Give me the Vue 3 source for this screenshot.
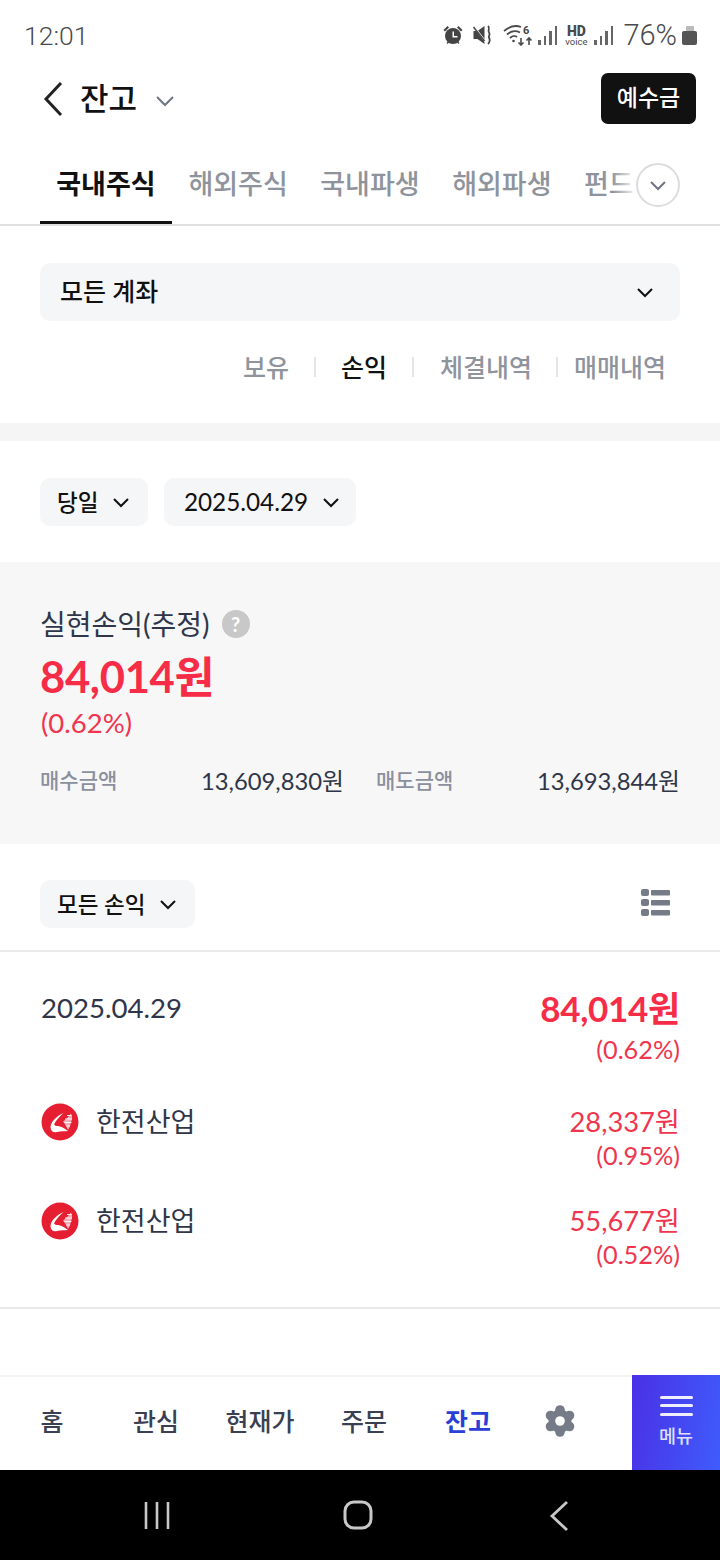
<script setup>
const tabs = ['국내주식', '해외주식', '국내파생', '해외파생', '펀드']
const subs = ['보유', '손익', '체결내역', '매매내역']
const stocks = [
  { name: '한전산업', amt: '28,337원', pct: '(0.95%)' },
  { name: '한전산업', amt: '55,677원', pct: '(0.52%)' }
]
const nav = ['홈', '관심', '현재가', '주문', '잔고']
const lobes = [[16, 5], [25.5, 10.5], [25.5, 21.5], [16, 27], [6.5, 21.5], [6.5, 10.5]]
</script>

<template>
  <div class="page">
    <div class="status">
      <span class="time">12:01</span>
      <div class="status-right">
        <svg width="22" height="22" viewBox="0 0 22 22" fill="#444"><circle cx="11" cy="12" r="8"/><path d="M1.500 6 5.500 2 7 3.500 3 7.500zM20.500 6 16.500 2 15 3.500l4 4zM4.500 19l2-2 1 1-2 2zM17.500 19l-2-2-1 1 2 2z"/><path d="M10.500 7.500h1.500V12h3.500v1.500h-5z" fill="#fff"/></svg>
        <svg class="ml-mute" width="22" height="22" viewBox="0 0 21 22" fill="#444"><path d="M1 7h4l7-5v18l-7-5H1z"/><path d="m1 2 13 17" stroke="#fff" stroke-width="2"/><path d="m1 3 11 14" stroke="#444" stroke-width="1.500"/><path d="M15.500 2c3 3-1 4 1 6.500s-1 3 0 5 1.500 4-1 6.500" fill="none" stroke="#444" stroke-width="1.800"/></svg>
        <svg class="ml-wifi" width="30" height="22" viewBox="0 0 30 22" fill="none" stroke="#4a4a4a" stroke-width="1.800"><path d="M1 7c6-5 12-6 17-4M4 10.500c4-3.500 9-4 13-2M7 14c2-2 5-2.500 7-1"/><circle cx="10.500" cy="17" r="1.300" fill="#4a4a4a" stroke="none"/><path d="M18 14v7m-2.500-2.500 2.500 2.500 2.500-2.500M26 21v-7m-2.500 2.500 2.500-2.500 2.500 2.500" stroke-width="1.600"/><text x="20" y="10" font-size="11" font-weight="700" font-family="Roboto" fill="#444" stroke="none">6</text></svg>
        <div class="bars b1"><i style="height:5px"></i><i style="height:9px"></i><i style="height:14px"></i><i style="height:19px"></i></div>
        <div class="hd"><b>HD</b><span>voice</span></div>
        <div class="bars b2"><i style="height:5px"></i><i style="height:9px"></i><i style="height:14px"></i><i style="height:19px"></i></div>
        <span class="pct">76%</span>
        <div class="batt"></div>
      </div>
    </div>

    <header class="head">
      <div class="head-left">
        <svg width="22" height="36" viewBox="0 0 22 36" fill="none" stroke="#222" stroke-width="3"><path d="M19 2 4 18l15 16"/></svg>
        <h1 class="title">잔고</h1>
        <svg class="title-caret" width="20" height="12" viewBox="0 0 20 12" fill="none" stroke="#6f7681" stroke-width="2"><path d="m2 2 8 8 8-8"/></svg>
      </div>
      <button class="deposit">예수금</button>
    </header>

    <div class="tabs">
      <div class="tab-row">
        <span v-for="(t, i) in tabs" :key="t" class="tab" :class="{ active: i === 0 }">{{ t }}</span>
      </div>
      <div class="fade"></div>
      <div class="more">
        <svg width="18" height="11" viewBox="0 0 18 11" fill="none" stroke="#6f7681" stroke-width="2"><path d="m2 2 7 7 7-7"/></svg>
      </div>
    </div>

    <div class="account">
      <span class="account-label">모든 계좌</span>
      <svg width="18" height="11" viewBox="0 0 18 11" fill="none" stroke="#111" stroke-width="2"><path d="m2 2 7 7 7-7"/></svg>
    </div>

    <div class="subs">
      <template v-for="(s, i) in subs" :key="s">
        <span v-if="i" class="sep" :class="{ wide: i === 2, tight: i === 3 }"></span>
        <span class="sub" :class="{ on: i === 1 }">{{ s }}</span>
      </template>
    </div>

    <div class="band"></div>

    <div class="filters">
      <div class="chip"><span>당일</span><svg width="18" height="11" viewBox="0 0 18 11" fill="none" stroke="#111" stroke-width="2"><path d="m2 2 7 7 7-7"/></svg></div>
      <div class="chip date"><span>2025.04.29</span><svg width="18" height="11" viewBox="0 0 18 11" fill="none" stroke="#111" stroke-width="2"><path d="m2 2 7 7 7-7"/></svg></div>
    </div>

    <section class="summary">
      <div class="sum-title">
        <span>실현손익(추정)</span>
        <span class="q">?</span>
      </div>
      <div class="sum-amt">84,014원</div>
      <div class="sum-pct">(0.62%)</div>
      <div class="sum-grid">
        <div class="sum-cell"><span class="lbl">매수금액</span><span class="val">13,609,830원</span></div>
        <div class="sum-cell"><span class="lbl">매도금액</span><span class="val">13,693,844원</span></div>
      </div>
    </section>

    <div class="list-bar">
      <div class="chip"><span>모든 손익</span><svg width="18" height="11" viewBox="0 0 18 11" fill="none" stroke="#111" stroke-width="2"><path d="m2 2 7 7 7-7"/></svg></div>
      <svg class="list-icon" width="30" height="28" viewBox="0 0 30 28" fill="#757b87"><rect x="1" y="1" width="8" height="7" rx="2"/><rect x="1" y="11" width="8" height="7" rx="2"/><rect x="1" y="21" width="8" height="7" rx="2"/><rect x="11" y="2" width="19" height="5.500" rx="1"/><rect x="11" y="12" width="19" height="5.500" rx="1"/><rect x="11" y="22" width="19" height="5.500" rx="1"/></svg>
    </div>

    <section class="result">
      <div class="res-head">
        <span class="res-date">2025.04.29</span>
        <div class="res-right">
          <div class="res-amt">84,014원</div>
          <div class="res-pct">(0.62%)</div>
        </div>
      </div>
      <div v-for="(s, i) in stocks" :key="i" class="stock">
        <div class="stock-left">
          <svg width="38" height="38" viewBox="0 0 38 38"><circle cx="19" cy="19" r="18.500" fill="#e61e32"/><path d="M22.500 10C16 13 10 18 9.500 24c0 4 2.500 6 6.500 5 4-1 8-.5 11-1-3-2-5-4-8-4.500-2-1-5 0-6-2 1.500-3.500 5-7.500 9.500-11.500z" fill="#fff"/><path d="M30 10.500c1.500 3 1.500 6 0 8.500-.5 3-1.500 6-3 8-1.500-3-3-6-5-8.500 3-2 5.500-5 8-8z" fill="#f8aab2"/><path d="M24 16h7M23.500 19.500h7M26 12.500h4.500M25.500 23h3.500" stroke="#fff" stroke-width=".9"/></svg>
          <span class="stock-name">{{ s.name }}</span>
        </div>
        <div class="stock-right">
          <div class="stock-amt">{{ s.amt }}</div>
          <div class="stock-pct">{{ s.pct }}</div>
        </div>
      </div>
    </section>

    <div class="spacer"></div>

    <nav class="nav">
      <div class="nav-items">
        <span v-for="n in nav" :key="n" class="nav-item" :class="{ on: n === '잔고' }">{{ n }}</span>
        <span class="nav-item gear">
          <svg width="32" height="32" viewBox="0 0 32 32">
            <g fill="#757b87">
              <circle cx="16" cy="16" r="11.500"/>
              <circle v-for="(p, i) in lobes" :key="i" :cx="p[0]" :cy="p[1]" r="4.800"/>
            </g>
            <circle cx="16" cy="16" r="4.800" fill="#fff"/>
          </svg>
        </span>
      </div>
      <div class="menu">
        <div class="burger"><i></i><i></i><i></i></div>
        <span>메뉴</span>
      </div>
    </nav>

    <div class="sysnav">
      <svg width="30" height="30" viewBox="0 0 30 30" stroke="#c8c8c8" stroke-width="2.600" fill="none"><path d="M4 2v27M15 2v27M26 2v27"/></svg>
      <svg width="30" height="30" viewBox="0 0 30 30" stroke="#c8c8c8" stroke-width="3" fill="none"><rect x="2" y="2" width="26" height="26" rx="9"/></svg>
      <svg width="30" height="32" viewBox="0 0 30 32" stroke="#c8c8c8" stroke-width="2.800" fill="none"><path d="M23 2 8 16l15 14"/></svg>
    </div>
  </div>
</template>

<style>
html, body { margin: 0; background: #fff; }
</style>

<style scoped>
.page {
  width: 720px;
  height: 1560px;
  display: flex;
  flex-direction: column;
  background: #fff;
  overflow: hidden;
  font-family: Lato, "Noto Sans CJK KR", sans-serif;
  color: #2f3649;
}
.status {
  height: 70px;
  flex: none;
  box-sizing: border-box;
  padding: 0 23px 0 24px;
  display: flex;
  align-items: center;
  justify-content: space-between;
  color: #555;
  font-family: Roboto, sans-serif;
}
.time { font-size: 26.500px; font-weight: 300; color: #4a4a4a; }
.status-right { display: flex; align-items: center; }
.ml-mute { margin-left: 8px; }
.ml-wifi { margin-left: 9px; }
.bars { display: flex; align-items: flex-end; justify-content: space-between; width: 19px; height: 19px; }
.bars i { width: 2.500px; background: #666; display: block; }
.b1 { margin-left: 5px; }
.b2 { margin-left: 7px; }
.hd { display: flex; flex-direction: column; align-items: center; margin-left: 8px; line-height: 1; color: #4a4a4a; width: 22px; }
.hd b { font-size: 14px; line-height: 12px; font-weight: 900; }
.hd span { font-size: 9.500px; line-height: 9px; }
.pct { font-size: 29px; font-weight: 300; margin-left: 10px; color: #4a4a4a; }
.batt {
  position: relative;
  width: 15px;
  height: 14px;
  margin-left: 5px;
  margin-top: 5px;
  background: #555;
  border-radius: 2px;
}
.batt::before {
  content: "";
  position: absolute;
  left: 3.500px;
  top: -5px;
  width: 8px;
  height: 5px;
  background: #bbb;
  border-radius: 1px 1px 0 0;
}
.head {
  height: 54px;
  flex: none;
  padding: 3px 24px 0 42px;
  box-sizing: border-box;
  display: flex;
  align-items: center;
  justify-content: space-between;
}
.head-left { display: flex; align-items: center; }
.title { margin: -2px 0 0 16px; font-size: 31px; line-height: 40px; font-weight: 500; color: #111; }
.title-caret { margin-left: 18px; margin-top: 4px; }
.deposit {
  width: 95px;
  height: 51px;
  border: 0;
  border-radius: 7px;
  background: #111;
  color: #fff;
  font: 500 23px "Noto Sans CJK KR", sans-serif;
  padding: 0 0 5px;
}
.tabs {
  position: relative;
  height: 102px;
  flex: none;
  box-sizing: border-box;
  border-bottom: 2px solid #dfdfdf;
  overflow: hidden;
}
.tab-row {
  height: 100px;
  display: flex;
  padding-left: 40px;
  box-sizing: border-box;
}
.tab {
  flex: none;
  box-sizing: border-box;
  padding: 38px 16.250px 0;
  font-size: 27px;
  line-height: 44px;
  font-weight: 500;
  color: #8e939c;
  white-space: nowrap;
}
.tab.active {
  color: #111;
  font-weight: 700;
  border-bottom: 3px solid #111;
  padding-right: 16.500px;
}
.fade {
  position: absolute;
  left: 612px;
  top: 30px;
  width: 108px;
  height: 60px;
  background: linear-gradient(90deg, rgba(255,255,255,0), #fff 24%);
}
.more {
  position: absolute;
  left: 636px;
  top: 39px;
  width: 44px;
  height: 44px;
  box-sizing: border-box;
  border: 2px solid #dcdcdc;
  border-radius: 50%;
  background: #fff;
  display: flex;
  align-items: center;
  justify-content: center;
}
.account {
  flex: none;
  margin: 37px 40px 0;
  height: 58px;
  box-sizing: border-box;
  padding: 0 26px 0 20px;
  border-radius: 10px;
  background: #f5f6f7;
  display: flex;
  align-items: center;
  justify-content: space-between;
  font-size: 25px;
  font-weight: 500;
  color: #111;
}
.account-label { margin-top: -4px; }
.subs {
  flex: none;
  height: 46px;
  margin-top: 23px;
  padding-right: 54px;
  display: flex;
  align-items: center;
  justify-content: flex-end;
  font-size: 25px;
  color: #8e939c;
  font-weight: 500;
}
.sub { margin-top: -3px; }
.sep { width: 2px; height: 20px; background: #e4e5e8; margin: 0 25px; }
.sep.wide { margin: 0 25.500px; }
.sep.tight { margin: 0 15.500px 0 24.500px; }
.sub.on { color: #111; }
.band { flex: none; height: 18px; margin-top: 33px; background: #f5f5f6; }
.filters {
  flex: none;
  display: flex;
  gap: 16px;
  padding: 37px 40px 36px;
}
.chip {
  height: 48px;
  box-sizing: border-box;
  padding: 0 18px 0 17px;
  border-radius: 10px;
  background: #f5f6f7;
  display: flex;
  align-items: center;
  gap: 14px;
  font-size: 22.500px;
  font-weight: 500;
  color: #111;
}
.chip > span { margin-top: -3px; }
.chip.date { padding: 0 16px 0 19.500px; font-size: 24.300px; font-weight: 400; }
.chip.date > span { margin-top: -1px; }
.summary {
  flex: none;
  height: 282px;
  box-sizing: border-box;
  background: #f7f7f8;
  padding: 42px 40px 0;
}
.sum-title { display: flex; align-items: center; gap: 12px; font-size: 28px; line-height: 40px; }
.q {
  width: 28px;
  height: 28px;
  border-radius: 50%;
  background: #c8c8c8;
  color: #fff;
  font-size: 20px;
  font-weight: 700;
  line-height: 28px;
  text-align: center;
}
.sum-amt { font-size: 43.500px; font-weight: 700; line-height: 56px; margin-top: 4px; color: #f72d48; letter-spacing: -.3px; }
.sum-pct { font-size: 27.500px; line-height: 34px; margin: 2px 0 0 1px; color: #f0354f; }
.sum-grid { display: grid; grid-template-columns: 1fr 1fr; column-gap: 32px; margin-top: 20px; }
.sum-cell { display: flex; justify-content: space-between; align-items: center; height: 38px; }
.lbl { font-size: 21px; color: #8a909c; font-weight: 500; }
.val { font-size: 23.800px; }
.list-bar {
  flex: none;
  height: 108px;
  box-sizing: border-box;
  padding: 36px 50px 0 40px;
  display: flex;
  align-items: flex-start;
  justify-content: space-between;
  border-bottom: 2px solid #e8e9ea;
}
.list-icon { margin-top: 8px; }
.result {
  flex: none;
  height: 357px;
  box-sizing: border-box;
  padding: 33px 40px 0;
  border-bottom: 2px solid #e8e9ea;
}
.res-head { display: flex; justify-content: space-between; height: 107px; }
.res-date { font-size: 27.600px; line-height: 46px; margin-left: 1px; }
.res-right { text-align: right; }
.res-amt { font-size: 35px; font-weight: 700; line-height: 46px; color: #f72d48; letter-spacing: -.3px; }
.res-pct { font-size: 25.300px; line-height: 34px; margin-top: 1px; color: #f0354f; }
.stock { display: flex; justify-content: space-between; height: 99px; padding-top: 10px; box-sizing: border-box; }
.stock-left { display: flex; align-items: center; height: 40px; gap: 17px; margin-left: 1px; }
.stock-name { font-size: 27px; margin-top: -3px; }
.stock-right { text-align: right; color: #f0354f; }
.stock-amt { font-size: 27.300px; line-height: 36px; margin-top: 2px; }
.stock-pct { font-size: 25.300px; line-height: 31px; }
.spacer { flex: 1; }
.nav {
  flex: none;
  height: 95px;
  display: flex;
  box-sizing: border-box;
  border-top: 2px solid #f4f4f5;
  position: relative;
}
.nav-items {
  width: 632px;
  display: flex;
  align-items: center;
  font-size: 25px;
  font-weight: 500;
  color: #3a4052;
  padding-bottom: 7px;
  box-sizing: border-box;
}
.nav-item { width: 104px; text-align: center; flex: none; }
.nav-item.on { color: #2a3fd6; font-weight: 700; }
.gear { display: flex; justify-content: center; width: 80px; margin-top: 2px; }
.menu {
  position: absolute;
  right: 0;
  top: -2px;
  width: 88px;
  height: 95px;
  background: linear-gradient(100deg, #4a30e6, #3f5cfb);
  color: #dfe0ff;
  display: flex;
  flex-direction: column;
  align-items: center;
  justify-content: center;
  font-size: 18.500px;
  font-weight: 500;
  box-sizing: border-box;
  padding-bottom: 2px;
}
.burger { width: 33px; display: flex; flex-direction: column; gap: 5.500px; margin-bottom: 6px; }
.burger i { display: block; height: 3px; background: #eef; border-radius: 2px; }
.sysnav {
  flex: none;
  height: 90px;
  background: #000;
  display: flex;
  align-items: center;
  padding-left: 142px;
  gap: 172px;
  box-sizing: border-box;
}
.sysnav svg:nth-child(2) { margin-left: -1px; }
.sysnav svg:nth-child(3) { margin-left: -1px; margin-top: 2px; }
</style>
